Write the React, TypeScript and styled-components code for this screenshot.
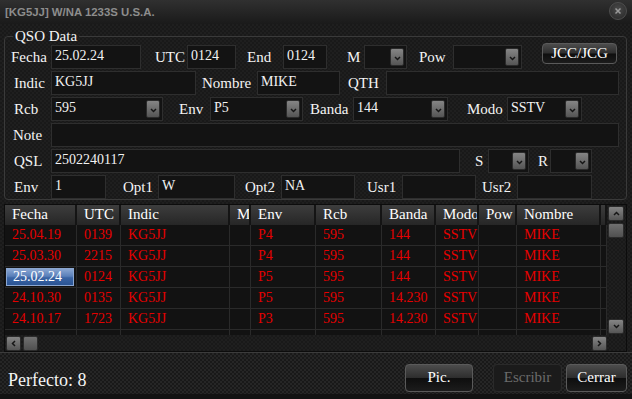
import React from 'react';
import styled, { createGlobalStyle, css } from 'styled-components';

const serif = '"Liberation Serif", "Times New Roman", serif';

const GlobalStyle = createGlobalStyle`
    html, body {
        margin: 0;
        padding: 0;
        background: #111;
    }
    body {
        width: 632px;
        height: 399px;
        overflow: hidden;
        font-family: ${serif};
    }
`;

const carbon = css`
    background-color: #1f1f1f;
    background-image:
        linear-gradient(45deg, #191919 25%, transparent 25%, transparent 75%, #191919 75%),
        linear-gradient(45deg, #191919 25%, transparent 25%, transparent 75%, #191919 75%);
    background-size: 4px 4px;
    background-position: 0 0, 2px 2px;
`;

const grayKnob = css`
    background: linear-gradient(#858585, #555);
    border: 1px solid #2b2b2b;
    border-radius: 2px;
    box-sizing: border-box;
    display: flex;
    align-items: center;
    justify-content: center;
`;

const Window = styled('div')`
    width: 632px;
    height: 399px;
    display: flex;
    flex-direction: column;
    background: #121212;
    overflow: hidden;
    font-family: ${serif};
`;

const TitleBar = styled('div')`
    height: 24px;
    flex: none;
    display: flex;
    align-items: center;
    justify-content: space-between;
    padding: 0 5px;
    background: linear-gradient(#303030, #1a1a1a);
    box-sizing: border-box;
`;

const TitleText = styled('span')`
    font-family: "Liberation Sans", Arial, sans-serif;
    font-weight: bold;
    font-size: 11.4px;
    color: #8d8d8d;
`;

const CloseButton = styled('div')`
    width: 18px;
    height: 18px;
    margin-top: -3px;
    border-radius: 50%;
    box-sizing: border-box;
    border: 1px solid #4e4e4e;
    background: radial-gradient(circle at 50% 40%, #4a4a4a, #262626);
    display: flex;
    align-items: center;
    justify-content: center;
`;

const Main = styled('div')`
    ${carbon}
    height: 328px;
    flex: none;
    padding: 0 5px 0 4px;
    box-sizing: border-box;
`;

const Group = styled('fieldset')`
    margin: 4px 0 0 0;
    padding: 1px 0 0 6px;
    border: 1px solid #3a3a3a;
    border-radius: 4px;
    min-width: 0;
    display: flex;
    flex-direction: column;
    gap: 2px;
`;

const Legend = styled('legend')`
    margin-left: 2px;
    padding: 0 2px;
    font-family: ${serif};
    font-size: 15px;
    line-height: 16px;
    color: #f4f4f4;
`;

const Row = styled('div')`
    display: flex;
    align-items: center;
    height: 24px;
`;

const Label = styled('span')<{ $w: number; $ml?: number }>`
    flex: none;
    width: ${(p) => p.$w}px;
    margin-left: ${(p) => p.$ml || 0}px;
    font-family: ${serif};
    font-size: 15px;
    color: #f4f4f4;
    white-space: nowrap;
`;

const Field = styled('div')<{ $w: number }>`
    flex: none;
    width: ${(p) => p.$w}px;
    height: 24px;
    box-sizing: border-box;
    background: #131313;
    border: 1px solid #2e2e2e;
    padding: 0 0 3px 3px;
    display: flex;
    align-items: center;
    justify-content: space-between;
    font-family: ${serif};
    font-size: 14px;
    color: #f2f2f2;
    white-space: nowrap;
    overflow: hidden;
`;

const DropButton = styled('div')`
    ${grayKnob}
    width: 14px;
    height: 18px;
    margin: 3px 2px 0 0;
    flex: none;
    padding-top: 3px;
`;

const GlossButton = styled('div')<{ $w: number; $h: number; $ml?: number; $mt?: number; $off?: boolean }>`
    flex: none;
    width: ${(p) => p.$w}px;
    height: ${(p) => p.$h}px;
    margin-left: ${(p) => p.$ml || 0}px;
    margin-top: ${(p) => p.$mt || 0}px;
    align-self: flex-start;
    box-sizing: border-box;
    border-radius: 4px;
    border: 1px solid ${(p) => (p.$off ? '#2a2a2a' : '#5a5a5a')};
    background: ${(p) =>
        p.$off
            ? '#1b1b1b'
            : 'linear-gradient(#4c4c4c 0%, #2e2e2e 48%, #0e0e0e 52%, #1c1c1c 100%)'};
    color: ${(p) => (p.$off ? '#6b6b6b' : '#fff')};
    font-family: ${serif};
    font-size: 15px;
    display: flex;
    align-items: center;
    justify-content: center;
    padding-bottom: 1px;
`;

const TableFrame = styled('div')`
    margin-top: 4px;
    border: 1px solid #0c0c0c;
    display: grid;
    grid-template-columns: 602px 19px;
    grid-template-rows: 130px 16px;
`;

const DataArea = styled('div')`
    background: #121212;
    overflow: hidden;
`;

const Grid = styled('table')`
    width: 602px;
    table-layout: fixed;
    border-collapse: separate;
    border-spacing: 0;
    font-family: ${serif};
`;

const Col = styled('col')<{ $w?: number }>`
    ${(p) => p.$w && `width: ${p.$w}px;`}
`;

const HeadCell = styled('th')`
    height: 20px;
    box-sizing: border-box;
    padding: 0 0 1px 7px;
    text-align: left;
    font-family: ${serif};
    font-weight: normal;
    font-size: 15px;
    color: #fff;
    background: linear-gradient(#3d3d3d, #262626);
    border-right: 2px solid #141414;
    white-space: nowrap;
    overflow: hidden;
`;

const Cell = styled('td')`
    height: 21px;
    box-sizing: border-box;
    padding: 0 0 0 7px;
    font-family: ${serif};
    font-size: 14px;
    color: #e60000;
    border-right: 1px solid #2a2a2a;
    border-bottom: 1px solid #2a2a2a;
    white-space: nowrap;
    overflow: hidden;
`;

const PickCell = styled(Cell)`
    padding: 0;
`;

const Picked = styled('div')`
    margin: 1px 2px 1px 1px;
    height: 18px;
    box-sizing: border-box;
    padding: 0 0 1px 6px;
    border: 1px solid #8aa6d0;
    background: linear-gradient(#8aa6d2 0%, #5a80ba 45%, #3a64a4 55%, #2b5494 100%);
    color: #fff;
    display: flex;
    align-items: center;
`;

const VScroll = styled('div')`
    ${carbon}
    display: flex;
    flex-direction: column;
    padding: 1px 0 1px 1px;
    box-sizing: border-box;
`;

const HScroll = styled('div')`
    ${carbon}
    display: flex;
    padding: 1px 0 0 1px;
    box-sizing: border-box;
`;

const Corner = styled('div')`
    ${carbon}
`;

const ScrollKnob = styled('div')<{ $thumb?: boolean }>`
    ${grayKnob}
    width: 15px;
    height: 15px;
    flex: none;
    ${(p) => p.$thumb && 'background: linear-gradient(#707070, #505050);'}
`;

const VKnob = styled(ScrollKnob)`
    width: 16px;
`;

const Spacer = styled('div')`
    flex: 1;
`;

const Footer = styled('div')`
    ${carbon}
    background-color: #262626;
    height: 42px;
    flex: none;
    box-sizing: border-box;
    border-top: 1px solid #3c3c3c;
    display: flex;
    align-items: flex-start;
    padding: 11px 5px 0 8px;
`;

const Status = styled('div')`
    flex: 1;
    padding-top: 6px;
    font-family: ${serif};
    font-size: 18px;
    line-height: 20px;
    color: #f4f4f4;
`;

const Chevron = ({ dir }: { dir: 'up' | 'down' | 'left' | 'right' }) => {
    const rot = { down: 0, up: 180, left: 90, right: -90 }[dir];
    return (
        <svg width="7" height="5" viewBox="0 0 7 5" style={{ transform: `rotate(${rot}deg)` }}>
            <path d="M1 1 L3.5 3.5 L6 1" stroke="#161616" strokeWidth="1.5" fill="none" />
        </svg>
    );
};

const Select = ({ w, value }: { w: number; value?: string }) => (
    <Field $w={w}>
        <span>{value}</span>
        <DropButton>
            <Chevron dir="down" />
        </DropButton>
    </Field>
);

const columns = [
    { name: 'Fecha', w: 72 },
    { name: 'UTC', w: 44 },
    { name: 'Indic', w: 109 },
    { name: 'M', w: 21 },
    { name: 'Env', w: 65 },
    { name: 'Rcb', w: 66 },
    { name: 'Banda', w: 54 },
    { name: 'Modo', w: 43 },
    { name: 'Pow', w: 38 },
    { name: 'Nombre', w: 84 },
    { name: '', w: 0 }
];

const rows = [
    ['25.04.19', '0139', 'KG5JJ', '', 'P4', '595', '144', 'SSTV', '', 'MIKE'],
    ['25.03.30', '2215', 'KG5JJ', '', 'P4', '595', '144', 'SSTV', '', 'MIKE'],
    ['25.02.24', '0124', 'KG5JJ', '', 'P5', '595', '144', 'SSTV', '', 'MIKE'],
    ['24.10.30', '0135', 'KG5JJ', '', 'P5', '595', '14.230', 'SSTV', '', 'MIKE'],
    ['24.10.17', '1723', 'KG5JJ', '', 'P3', '595', '14.230', 'SSTV', '', 'MIKE'],
    ['', '', '', '', '', '', '', '', '', '']
];

export default function App() {
    return (
        <Window>
            <GlobalStyle />
            <TitleBar>
                <TitleText>[KG5JJ] W/NA 1233S U.S.A.</TitleText>
                <CloseButton>
                    <svg width="8" height="8" viewBox="0 0 8 8">
                        <path d="M1.5 1.5 L6.5 6.5 M6.5 1.5 L1.5 6.5" stroke="#9a9a9a" strokeWidth="1.5" />
                    </svg>
                </CloseButton>
            </TitleBar>
            <Main>
                <Group>
                    <Legend>QSO Data</Legend>
                    <Row>
                        <Label $w={40}>Fecha</Label>
                        <Field $w={90}>25.02.24</Field>
                        <Label $ml={14} $w={32}>UTC</Label>
                        <Field $w={49}>0124</Field>
                        <Label $ml={11} $w={36}>End</Label>
                        <Field $w={44}>0124</Field>
                        <Label $ml={20} $w={17}>M</Label>
                        <Select w={43} />
                        <Label $ml={12} $w={34}>Pow</Label>
                        <Select w={69} />
                        <GlossButton $w={75} $h={21} $ml={20} $mt={-2}>JCC/JCG</GlossButton>
                    </Row>
                    <Row>
                        <Label $ml={3} $w={37}>Indic</Label>
                        <Field $w={145}>KG5JJ</Field>
                        <Label $ml={6} $w={55}>Nombre</Label>
                        <Field $w={83}>MIKE</Field>
                        <Label $ml={8} $w={38}>QTH</Label>
                        <Field $w={233} />
                    </Row>
                    <Row>
                        <Label $ml={3} $w={37}>Rcb</Label>
                        <Select w={112} value="595" />
                        <Label $ml={16} $w={31}>Env</Label>
                        <Select w={93} value="P5" />
                        <Label $ml={7} $w={43}>Banda</Label>
                        <Select w={95} value="144" />
                        <Label $ml={19} $w={40}>Modo</Label>
                        <Select w={75} value="SSTV" />
                    </Row>
                    <Row>
                        <Label $ml={2} $w={38}>Note</Label>
                        <Field $w={568} />
                    </Row>
                    <Row>
                        <Label $ml={3} $w={37}>QSL</Label>
                        <Field $w={409}>2502240117</Field>
                        <Label $ml={15} $w={13}>S</Label>
                        <Select w={41} />
                        <Label $ml={9} $w={12}>R</Label>
                        <Select w={42} />
                    </Row>
                    <Row>
                        <Label $ml={3} $w={37}>Env</Label>
                        <Field $w={55}>1</Field>
                        <Label $ml={17} $w={35}>Opt1</Label>
                        <Field $w={77}>W</Field>
                        <Label $ml={10} $w={36}>Opt2</Label>
                        <Field $w={74}>NA</Field>
                        <Label $ml={12} $w={35}>Usr1</Label>
                        <Field $w={74} />
                        <Label $ml={6} $w={35}>Usr2</Label>
                        <Field $w={75} />
                    </Row>
                </Group>
                <TableFrame>
                    <DataArea>
                        <Grid>
                            <colgroup>
                                {columns.map((c, i) => (
                                    <Col key={i} $w={c.w || undefined} />
                                ))}
                            </colgroup>
                            <thead>
                                <tr>
                                    {columns.map((c, i) => (
                                        <HeadCell key={i}>{c.name}</HeadCell>
                                    ))}
                                </tr>
                            </thead>
                            <tbody>
                                {rows.map((r, ri) => (
                                    <tr key={ri}>
                                        {r.map((v, ci) =>
                                            ri === 2 && ci === 0 ? (
                                                <PickCell key={ci}>
                                                    <Picked>{v}</Picked>
                                                </PickCell>
                                            ) : (
                                                <Cell key={ci}>{v}</Cell>
                                            )
                                        )}
                                        <Cell />
                                    </tr>
                                ))}
                            </tbody>
                        </Grid>
                    </DataArea>
                    <VScroll>
                        <VKnob><Chevron dir="up" /></VKnob>
                        <VKnob $thumb style={{ marginTop: 2 }} />
                        <Spacer />
                        <VKnob><Chevron dir="down" /></VKnob>
                    </VScroll>
                    <HScroll>
                        <ScrollKnob><Chevron dir="left" /></ScrollKnob>
                        <ScrollKnob $thumb style={{ marginLeft: 2 }} />
                        <Spacer />
                        <ScrollKnob><Chevron dir="right" /></ScrollKnob>
                    </HScroll>
                    <Corner />
                </TableFrame>
            </Main>
            <Footer>
                <Status>Perfecto: 8</Status>
                <GlossButton $w={68} $h={28}>Pic.</GlossButton>
                <GlossButton $w={69} $h={28} $ml={20} $off>Escribir</GlossButton>
                <GlossButton $w={61} $h={28} $ml={4}>Cerrar</GlossButton>
            </Footer>
        </Window>
    );
}
